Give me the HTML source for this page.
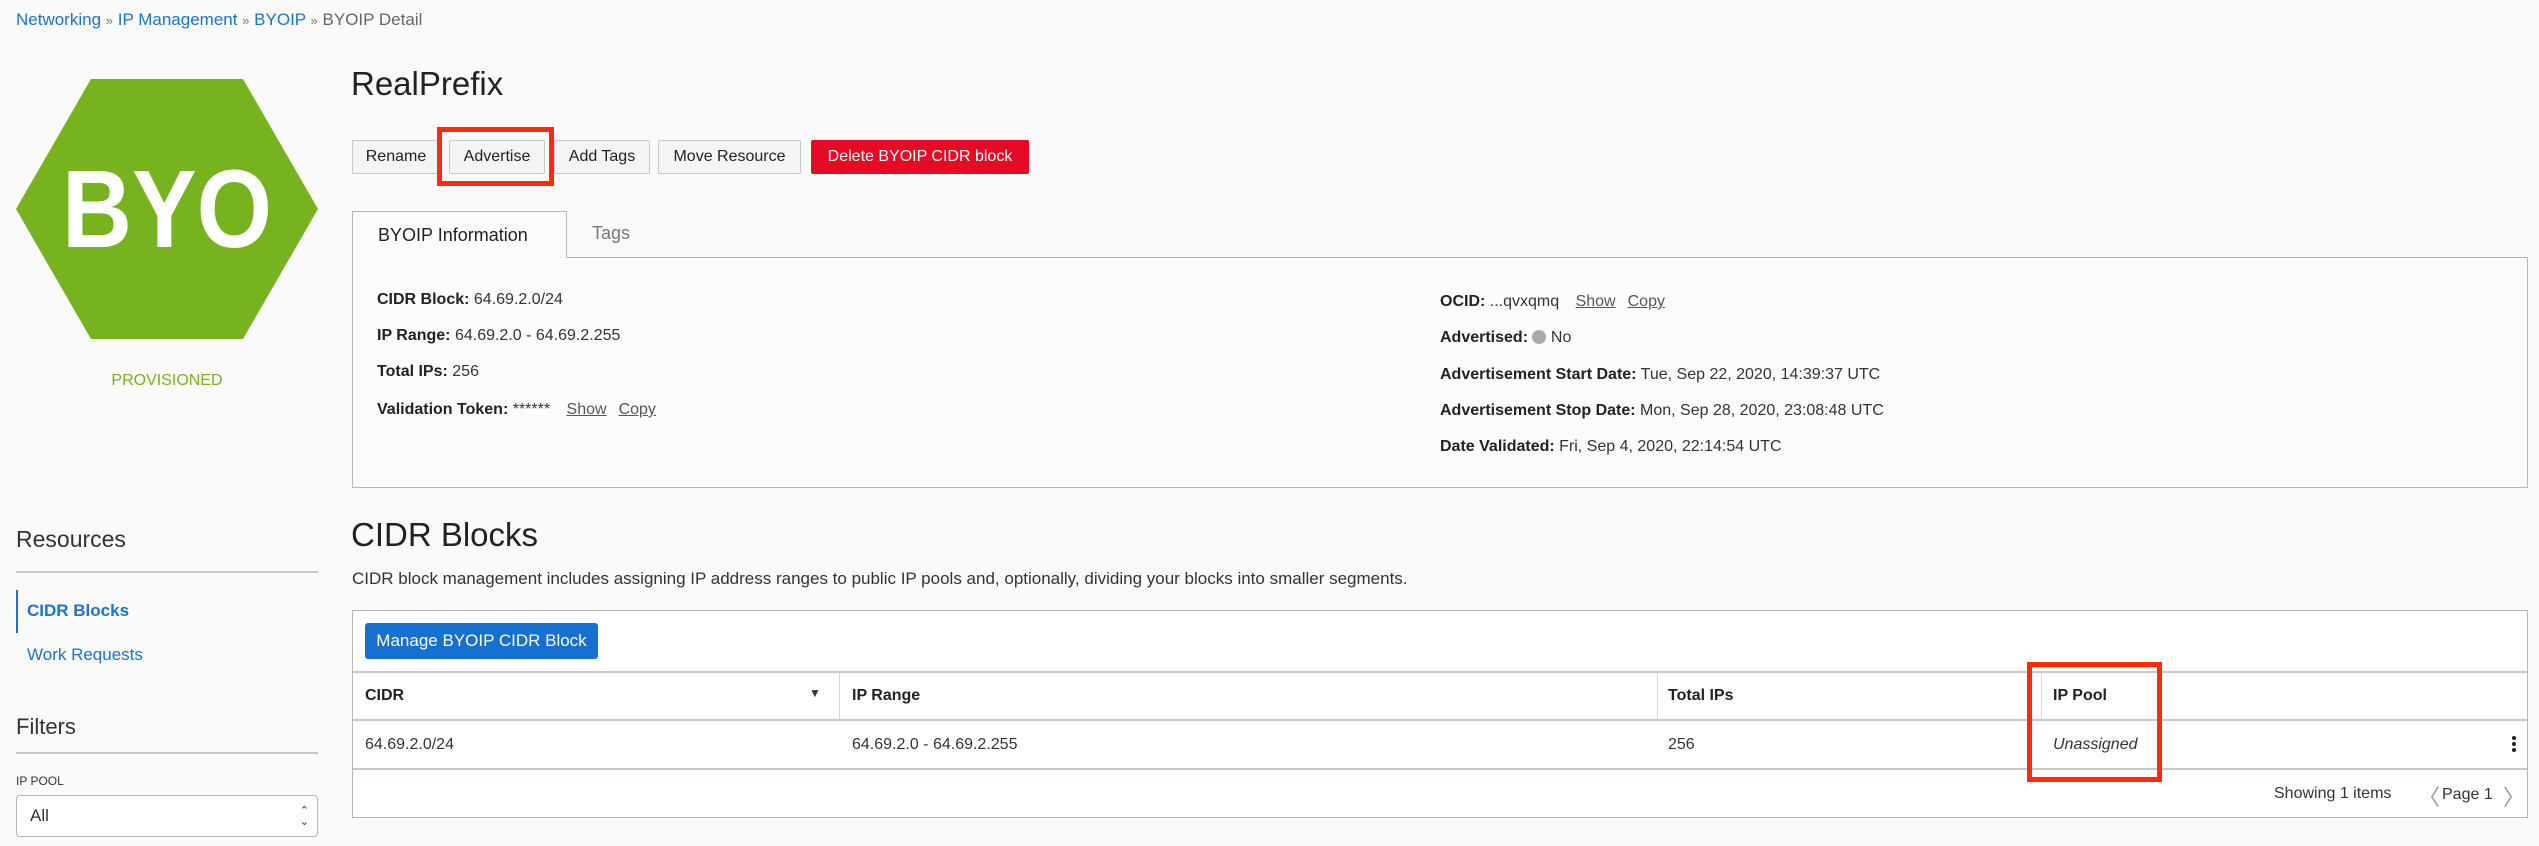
<!DOCTYPE html>
<html><head><meta charset="utf-8"><style>
*{margin:0;padding:0;box-sizing:border-box}
body{width:2539px;height:846px;background:#fafafa;font-family:"Liberation Sans",Arial,sans-serif;color:#333;position:relative;overflow:hidden;font-size:17px}
.a{position:absolute;white-space:nowrap}
a,.lnk{color:#1a73d0;text-decoration:none}
.btn{position:absolute;top:140px;height:34px;border:1px solid #c5c8cc;background:#f3f4f5;border-radius:2px;font-size:16px;line-height:32px;text-align:center;color:#222}
.red{position:absolute;border:5px solid #ff2a0a}
b{font-weight:bold;color:#222}
.u{color:#555;text-decoration:underline;margin-left:12px}
.row{position:absolute;font-size:16px;line-height:20px}
</style></head><body>
<div class="a" style="left:16px;top:10px;font-size:17px"><span class="lnk">Networking</span> <span style="color:#777;font-size:13px">»</span> <span class="lnk">IP Management</span> <span style="color:#777;font-size:13px">»</span> <span class="lnk">BYOIP</span> <span style="color:#777;font-size:13px">»</span> <span style="color:#666">BYOIP Detail</span></div>

<svg class="a" style="left:16px;top:79px" width="303" height="261"><polygon points="75,0 227,0 302,130 227,260 75,260 0,130" fill="#77b31e"/><text x="151" y="168" text-anchor="middle" font-family="Liberation Sans" font-weight="bold" font-size="110" fill="#fff" textLength="210" lengthAdjust="spacingAndGlyphs">BYO</text></svg>
<div class="a" style="left:0;width:334px;text-align:center;top:372px;font-size:16px;color:#77b31e">PROVISIONED</div>

<div class="a" style="left:351px;top:65px;font-size:33px;color:#222">RealPrefix</div>
<div class="btn" style="left:352px;width:88px">Rename</div>
<div class="btn" style="left:449px;width:96px">Advertise</div>
<div class="btn" style="left:554px;width:96px">Add Tags</div>
<div class="btn" style="left:658px;width:143px">Move Resource</div>
<div class="btn" style="left:811px;width:218px;background:#e60b25;border-color:#e60b25;color:#fff">Delete BYOIP CIDR block</div>
<div class="red" style="left:437px;top:127px;width:117px;height:59px"></div>

<div class="a" style="left:352px;top:257px;width:2176px;height:231px;border:1px solid #b3b6ba;background:#fcfcfc"></div>
<div class="a" style="left:352px;top:211px;width:215px;height:47px;border:1px solid #b3b6ba;border-bottom:none;background:#fcfcfc;font-size:18px;line-height:46px;padding-left:25px;color:#222">BYOIP Information</div>
<div class="a" style="left:592px;top:223px;font-size:18px;color:#777">Tags</div>

<div class="row" style="left:377px;top:290px"><b>CIDR Block:</b> 64.69.2.0/24</div>
<div class="row" style="left:377px;top:326px"><b>IP Range:</b> 64.69.2.0 - 64.69.2.255</div>
<div class="row" style="left:377px;top:362px"><b>Total IPs:</b> 256</div>
<div class="row" style="left:377px;top:400px"><b>Validation Token:</b> ****** <span class="u">Show</span><span class="u">Copy</span></div>

<div class="row" style="left:1440px;top:292px"><b>OCID:</b> ...qvxqmq <span class="u">Show</span><span class="u">Copy</span></div>
<div class="row" style="left:1440px;top:328px"><b>Advertised:</b> <span style="display:inline-block;width:14px;height:14px;border-radius:50%;background:#aaa;vertical-align:-2px"></span> No</div>
<div class="row" style="left:1440px;top:365px"><b>Advertisement Start Date:</b> Tue, Sep 22, 2020, 14:39:37 UTC</div>
<div class="row" style="left:1440px;top:401px"><b>Advertisement Stop Date:</b> Mon, Sep 28, 2020, 23:08:48 UTC</div>
<div class="row" style="left:1440px;top:437px"><b>Date Validated:</b> Fri, Sep 4, 2020, 22:14:54 UTC</div>

<div class="a" style="left:16px;top:526px;font-size:23px;color:#333">Resources</div>
<div class="a" style="left:16px;top:571px;width:302px;border-top:2px solid #c5c8cc"></div>
<div class="a" style="left:16px;top:590px;width:2px;height:43px;background:#1a73d0"></div>
<div class="a" style="left:27px;top:601px;font-size:17px;font-weight:bold;color:#1a73d0">CIDR Blocks</div>
<div class="a" style="left:27px;top:645px;font-size:17px;color:#1a73d0">Work Requests</div>
<div class="a" style="left:16px;top:714px;font-size:22px;color:#333">Filters</div>
<div class="a" style="left:16px;top:752px;width:302px;border-top:2px solid #c5c8cc"></div>
<div class="a" style="left:16px;top:774px;font-size:12px;color:#333">IP POOL</div>
<div class="a" style="left:16px;top:795px;width:302px;height:42px;border:1px solid #b3b6ba;border-radius:4px;background:#fff;font-size:17px;line-height:40px;padding-left:13px">All<span style="position:absolute;right:8px;top:0;font-size:11px;line-height:11px;top:10px;text-align:center">⌃<br>⌄</span></div>

<div class="a" style="left:351px;top:516px;font-size:33px;color:#222">CIDR Blocks</div>
<div class="a" style="left:352px;top:569px;font-size:17px;color:#333">CIDR block management includes assigning IP address ranges to public IP pools and, optionally, dividing your blocks into smaller segments.</div>

<div class="a" style="left:352px;top:610px;width:2176px;height:208px;border:1px solid #b3b6ba;background:#fff"></div>
<div class="a" style="left:365px;top:623px;width:233px;height:36px;background:#1570d0;border-radius:3px;color:#fff;font-size:17px;line-height:36px;text-align:center">Manage BYOIP CIDR Block</div>
<div class="a" style="left:353px;top:671px;width:2174px;border-top:2px solid #c5c8cc"></div>
<div class="a" style="left:353px;top:719px;width:2174px;border-top:2px solid #c5c8cc"></div>
<div class="a" style="left:353px;top:768px;width:2174px;border-top:2px solid #c5c8cc"></div>
<div class="a" style="left:839px;top:673px;height:46px;border-left:1px solid #d5d7da"></div>
<div class="a" style="left:1657px;top:673px;height:46px;border-left:1px solid #d5d7da"></div>
<div class="a" style="left:2041px;top:673px;height:46px;border-left:1px solid #d5d7da"></div>
<div class="row" style="left:365px;top:686px;font-weight:bold;color:#222">CIDR</div>
<div class="a" style="left:809px;top:686px;font-size:12px">▼</div>
<div class="row" style="left:852px;top:686px;font-weight:bold;color:#222">IP Range</div>
<div class="row" style="left:1668px;top:686px;font-weight:bold;color:#222">Total IPs</div>
<div class="row" style="left:2053px;top:686px;font-weight:bold;color:#222">IP Pool</div>
<div class="row" style="left:365px;top:735px">64.69.2.0/24</div>
<div class="row" style="left:852px;top:735px">64.69.2.0 - 64.69.2.255</div>
<div class="row" style="left:1668px;top:735px">256</div>
<div class="row" style="left:2053px;top:735px;font-style:italic">Unassigned</div>
<div class="a" style="left:2512px;top:736px;width:4px;font-size:0">
<div style="width:4px;height:4px;border-radius:50%;background:#222;margin-bottom:2px"></div><div style="width:4px;height:4px;border-radius:50%;background:#222;margin-bottom:2px"></div><div style="width:4px;height:4px;border-radius:50%;background:#222"></div></div>
<div class="a" style="left:2274px;top:785px;font-size:16px">Showing 1 items</div>
<div class="a" style="left:2418px;top:780px;font-size:22px;color:#999">〈</div>
<div class="a" style="left:2442px;top:786px;font-size:16px">Page 1</div>
<div class="a" style="left:2503px;top:780px;font-size:22px;color:#999">〉</div>
<div class="red" style="left:2027px;top:662px;width:135px;height:120px"></div>
</body></html>
